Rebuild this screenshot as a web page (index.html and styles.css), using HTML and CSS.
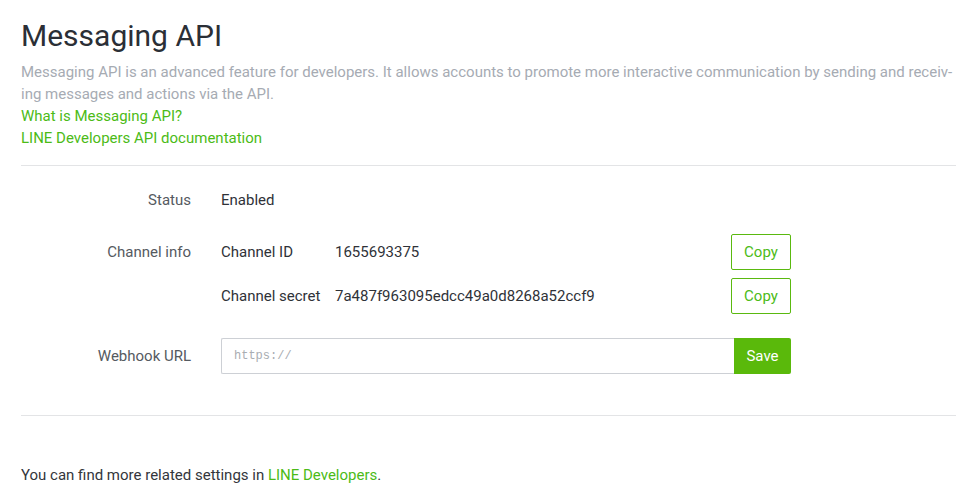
FILE: index.html
```
<!DOCTYPE html>
<html lang="en">
<head>
    <meta charset="UTF-8">
    <title>Messaging API</title>
    <link rel="stylesheet" href="styles.css">
</head>
<body>
    <div class="page">
        <h1 class="title">Messaging API</h1>
        <p class="desc">Messaging API is an advanced feature for developers. It allows accounts to promote more interactive communication by sending and receiv&shy;ing messages and actions via the API.</p>
        <a class="link" href="">What is Messaging API?</a>
        <a class="link" href="">LINE Developers API documentation</a>

        <!-- settings -->
        <div class="settings">
            <div class="row status_row">
                <div class="label">Status</div>
                <div class="value">Enabled</div>
            </div>
            <div class="row channel_row">
                <div class="label">Channel info</div>
                <div class="value">
                    <div class="sub_row">
                        <span class="sub_label">Channel ID</span>
                        <span class="sub_value">1655693375</span>
                        <button class="btn_copy">Copy</button>
                    </div>
                    <div class="sub_row">
                        <span class="sub_label">Channel secret</span>
                        <span class="sub_value">7a487f963095edcc49a0d8268a52ccf9</span>
                        <button class="btn_copy">Copy</button>
                    </div>
                </div>
            </div>
            <div class="row webhook_row">
                <div class="label">Webhook URL</div>
                <div class="value">
                    <div class="url_box">
                        <input class="url_input" type="text" placeholder="https://">
                        <button class="btn_save">Save</button>
                    </div>
                </div>
            </div>
        </div>

        <p class="footer">You can find more related settings in <a href="">LINE Developers</a>.</p>
    </div>
</body>
</html>
```
FILE: styles.css
```
*{margin: 0;padding: 0;box-sizing: border-box;}

body{font-family: Roboto, "Liberation Sans", sans-serif;font-size: 15px;color: #33363b;background: #fff;}

.page{padding: 16px 22px 0 21px;}

.title{font-size: 30px;font-weight: 400;line-height: 40px;color: #2b2f36;margin-bottom: 5px;}

.desc{line-height: 22px;color: #a6abb3;}

.link{display: block;line-height: 22px;color: #4cbb17;text-decoration: none;}

.settings{margin-top: 16px;border-top: 1px solid #e3e4e6;border-bottom: 1px solid #e3e4e6;padding: 16px 0 41px;}

.row{display: flex;gap: 30px;}
.row .label{width: 170px;text-align: right;line-height: 36px;color: #555a61;}
.row .value{width: 570px;line-height: 36px;color: #2f3238;}

.status_row{margin-bottom: 16px;}
.webhook_row{margin-top: 24px;}

.sub_row{display: flex;align-items: center;}
.sub_row + .sub_row{margin-top: 8px;}
.sub_label{width: 114px;}
.sub_value{flex: 1;}

button{font-family: inherit;font-size: 15px;cursor: pointer;}

.btn_copy{width: 60px;height: 36px;border: 1px solid #5ab90f;border-radius: 2px;background: #fff;color: #4cbb17;}

.url_box{display: flex;}
.url_input{width: 513px;height: 36px;border: 1px solid #cdd0d5;border-right: none;border-radius: 2px 0 0 2px;padding: 0 12px;font-family: "Liberation Mono", monospace;font-size: 12px;outline: none;}
.url_input::placeholder{color: #a9adb2;}
.btn_save{width: 57px;height: 36px;border: none;border-radius: 0 2px 2px 0;background: #5ab90b;color: #fff;}

.footer{margin-top: 48px;line-height: 22px;}
.footer a{color: #4cbb17;text-decoration: none;}
```
